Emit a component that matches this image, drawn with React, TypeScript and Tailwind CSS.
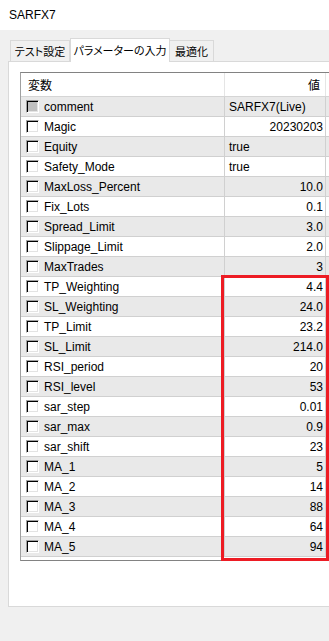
import React from "react"

type Param = { name: string; value: string; align: "left" | "right"; grayBox?: boolean }

const PARAMS: Param[] = [
  { name: "comment", value: "SARFX7(Live)", align: "left", grayBox: true },
  { name: "Magic", value: "20230203", align: "right" },
  { name: "Equity", value: "true", align: "left" },
  { name: "Safety_Mode", value: "true", align: "left" },
  { name: "MaxLoss_Percent", value: "10.0", align: "right" },
  { name: "Fix_Lots", value: "0.1", align: "right" },
  { name: "Spread_Limit", value: "3.0", align: "right" },
  { name: "Slippage_Limit", value: "2.0", align: "right" },
  { name: "MaxTrades", value: "3", align: "right" },
  { name: "TP_Weighting", value: "4.4", align: "right" },
  { name: "SL_Weighting", value: "24.0", align: "right" },
  { name: "TP_Limit", value: "23.2", align: "right" },
  { name: "SL_Limit", value: "214.0", align: "right" },
  { name: "RSI_period", value: "20", align: "right" },
  { name: "RSI_level", value: "53", align: "right" },
  { name: "sar_step", value: "0.01", align: "right" },
  { name: "sar_max", value: "0.9", align: "right" },
  { name: "sar_shift", value: "23", align: "right" },
  { name: "MA_1", value: "5", align: "right" },
  { name: "MA_2", value: "14", align: "right" },
  { name: "MA_3", value: "88", align: "right" },
  { name: "MA_4", value: "64", align: "right" },
  { name: "MA_5", value: "94", align: "right" },
]

function CheckBox({ gray }: { gray?: boolean }) {
  return (
    <span
      className={`block h-[13px] w-[13px] shrink-0 border border-t-[#a0a0a0] border-l-[#a0a0a0] border-r-white border-b-white shadow-[inset_1px_1px_0_#000,inset_-1px_-1px_0_#e3e3e3] ${
        gray ? "bg-[#c0c0c0]" : "bg-white"
      }`}
    />
  )
}

export default function App() {
  return (
    <div className="relative h-[641px] w-[329px] overflow-hidden bg-[#f0f0f0] font-['Liberation_Sans','Noto_Sans_CJK_JP',sans-serif] text-[12px] text-black">
      {/* Title bar */}
      <div className="flex h-[30px] items-center bg-white pl-[9px] text-[12px]">SARFX7</div>

      <div className="ml-[8px] mt-[8px]">
        {/* Tabs */}
        <div className="flex h-[23px] items-end whitespace-nowrap pl-[2px] font-['Noto_Sans_CJK_JP',sans-serif] text-[11px] [font-feature-settings:'palt']">
          <div className="flex h-[21px] w-[60px] items-center justify-center border border-b-0 border-[#d9d9d9] bg-[#f0f0f0] pt-px">
            テスト設定
          </div>
          <div className="relative z-10 -mb-px flex h-[24px] w-[100px] items-center justify-center border border-b-0 border-[#d9d9d9] bg-white">
            パラメーターの入力
          </div>
          <div className="flex h-[21px] w-[44px] items-center justify-center border border-b-0 border-l-0 border-[#d9d9d9] bg-[#f0f0f0] pt-px">
            最適化
          </div>
        </div>

        {/* Panel */}
        <div className="h-[546px] border border-r-0 border-[#d9d9d9] bg-white pl-[11px] pt-[10px]">
          <div className="w-[330px] border border-r-0 border-t-[#828282] border-l-[#a0a0a0] border-b-[#828282] bg-white pb-[3px]">
            {/* Header */}
            <div className="flex h-[24px] border-b border-[#d5d5d5]">
              <div className="flex w-[203px] items-center pl-[7px] font-['Noto_Sans_CJK_JP',sans-serif] text-[12px]">
                変数
              </div>
              <div className="flex w-[102px] items-center justify-end border-l border-r border-[#e5e5e5] pr-[5px] font-['Noto_Sans_CJK_JP',sans-serif] text-[12px]">
                値
              </div>
            </div>

            {/* Rows */}
            {PARAMS.map((p, i) => (
              <div
                key={p.name}
                className={`flex h-[20px] border-b border-[#d0d0d0] ${i % 2 === 0 ? "bg-[#e9e9e9]" : "bg-white"}`}
              >
                <div className="flex w-[203px] items-center gap-[5px] pl-[5px]">
                  <CheckBox gray={p.grayBox} />
                  <span>{p.name}</span>
                </div>
                <div
                  className={`flex w-[102px] items-center border-l border-r border-[#d0d0d0] ${
                    p.align === "right" ? "justify-end pr-[2px]" : "pl-[4px]"
                  }`}
                >
                  {p.value}
                </div>
              </div>
            ))}
          </div>
        </div>
      </div>

      {/* Red highlight annotation */}
      <div className="absolute left-[221px] top-[275px] h-[286px] w-[108px] border-[3px] border-[#ed1c24]" />
    </div>
  )
}
